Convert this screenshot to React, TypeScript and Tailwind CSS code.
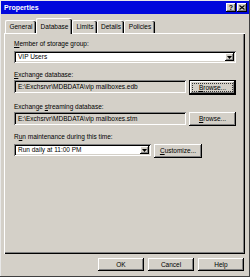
import React from 'react'

// classic 3D borders
const raised = 'bg-[#d4d0c8] shadow-[inset_-1px_-1px_#000,inset_1px_1px_#fff,inset_-2px_-2px_#808080]'
const sunken = 'shadow-[inset_1px_1px_#808080,inset_-1px_-1px_#fff,inset_2px_2px_#000,inset_-2px_-2px_#d4d0c8]'

interface TabProps {
  label: string
  width: string
  active?: boolean
}

const Tab: React.FC<TabProps> = ({ label, width, active }) => (
  <div
    className={`${width} flex items-center justify-center rounded-t-[2px] border-l border-t border-white shadow-[inset_-1px_0_#000,inset_-2px_0_#808080] ${
      active ? 'relative z-10 -mb-px h-[16px] bg-[#d4d0c8]' : 'h-[13px] bg-[#d4d0c8]'
    }`}
  >
    {label}
  </div>
)

const DropArrow: React.FC = () => (
  <div className={`${raised} flex h-[8px] w-[9px] items-center justify-center`}>
    <svg width="5" height="3" viewBox="0 0 5 3">
      <path d="M0 0h5L2.5 3z" fill="#000" />
    </svg>
  </div>
)

interface ButtonProps {
  label: React.ReactNode
  className?: string
  isDefault?: boolean
}

const Button: React.FC<ButtonProps> = ({ label, className, isDefault }) => (
  <div
    className={`${className ?? ''} ${
      isDefault
        ? 'border border-black bg-[#d4d0c8] shadow-[inset_-1px_-1px_#000,inset_1px_1px_#fff,inset_-2px_-2px_#808080]'
        : raised
    } flex items-center justify-center`}
  >
    {isDefault ? (
      <span className="border border-dotted border-[#333] px-[6px] leading-[7px]">{label}</span>
    ) : (
      label
    )}
  </div>
)

const App: React.FC = () => {
  return (
    <div
      className="flex h-[277px] w-[250px] flex-col bg-[#d4d0c8] text-[6.5px] text-black shadow-[inset_-1px_-1px_#404040,inset_1px_1px_#e8e8e8]"
      style={{ fontFamily: '"Liberation Sans", Arial, sans-serif' }}
    >
      {/* Title bar */}
      <div className="mx-px mt-px flex h-[13px] items-center justify-between bg-[#0008dc] pl-[3px] pr-[2px]">
        <span className="text-[7px] font-bold leading-none text-white">Properties</span>
        <div className="flex gap-[1px]">
          <div className={`${raised} flex h-[9px] w-[10px] items-center justify-center text-[7px] font-bold leading-none`}>?</div>
          <div className={`${raised} flex h-[9px] w-[10px] items-center justify-center`}>
            <svg width="6" height="5" viewBox="0 0 6 5">
              <path d="M0.5 0.5L5.5 4.5M5.5 0.5L0.5 4.5" stroke="#000" strokeWidth="1.2" />
            </svg>
          </div>
        </div>
      </div>

      {/* Tabs */}
      <div className="mt-[2px] flex h-[17px] items-end pl-[5px]">
        <Tab label="General" width="w-[31px]" />
        <Tab label="Database" width="w-[36px]" active />
        <Tab label="Limits" width="w-[25px]" />
        <Tab label="Details" width="w-[27px]" />
        <Tab label="Policies" width="w-[31px]" />
      </div>

      {/* Panel */}
      <div className="mx-[4px] flex h-[221px] w-[241px] flex-col border-l border-t border-white pl-[9px] pt-[6px] shadow-[inset_-1px_-1px_#000,inset_-2px_-2px_#808080]">
        <div className="leading-[8px]">
          <span className="underline">M</span>ember of storage group:
        </div>
        <div className={`${sunken} mt-[3px] flex h-[12px] w-[222px] items-center justify-between bg-white pl-[4px] pr-[2px]`}>
          <span>VIP Users</span>
          <DropArrow />
        </div>

        <div className="mt-[8px] leading-[8px]">
          <span className="underline">E</span>xchange database:
        </div>
        <div className="mt-[1px] flex items-start gap-[3px]">
          <div className={`${sunken} flex h-[13px] w-[172px] items-center bg-[#d4d0c8] pl-[4px]`}>
            E:\Exchsrvr\MDBDATA\vip mailboxes.edb
          </div>
          <Button
            isDefault
            className="h-[15px] w-[47px]"
            label={
              <>
                <span className="underline">B</span>rowse...
              </>
            }
          />
        </div>

        <div className="mt-[8px] leading-[8px]">
          Exchange <span className="underline">s</span>treaming database:
        </div>
        <div className="mt-[1px] flex items-start gap-[3px]">
          <div className={`${sunken} flex h-[13px] w-[172px] items-center bg-[#d4d0c8] pl-[4px]`}>
            E:\Exchsrvr\MDBDATA\vip mailboxes.stm
          </div>
          <Button
            className="h-[14px] w-[47px]"
            label={
              <>
                <span className="underline">B</span>rowse...
              </>
            }
          />
        </div>

        <div className="mt-[7px] leading-[8px]">
          R<span className="underline">u</span>n maintenance during this time:
        </div>
        <div className="mt-[3px] flex items-start gap-[3px]">
          <div className={`${sunken} flex h-[12px] w-[137px] items-center justify-between bg-white pl-[4px] pr-[2px]`}>
            <span>Run daily at 11:00 PM</span>
            <DropArrow />
          </div>
          <Button
            className="h-[14px] w-[48px]"
            label={
              <>
                <span className="underline">C</span>ustomize...
              </>
            }
          />
        </div>
      </div>

      {/* Bottom buttons */}
      <div className="mt-[4px] flex justify-end gap-[4px] pr-[6px]">
        <Button className="h-[13px] w-[46px]" label="OK" />
        <Button className="h-[13px] w-[46px]" label="Cancel" />
        <Button className="h-[13px] w-[46px]" label="Help" />
      </div>
    </div>
  )
}

export default App
